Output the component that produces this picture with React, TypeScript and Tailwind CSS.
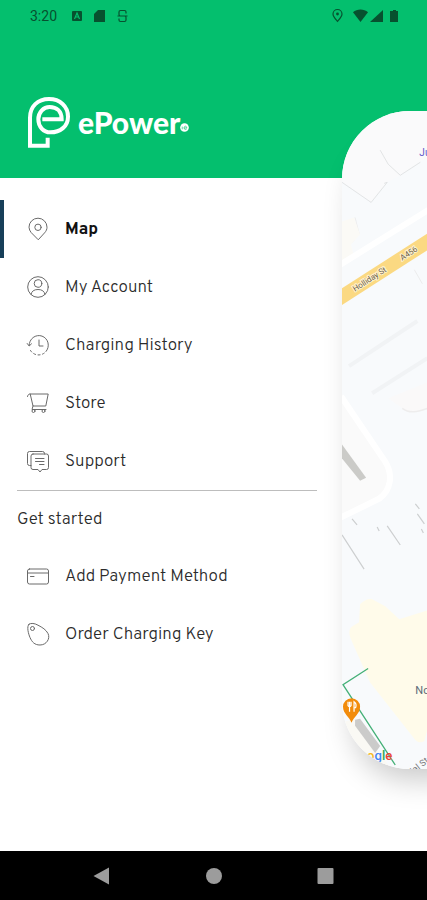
import type { ReactNode } from 'react'
import clsx from 'clsx'

function Icon({ children }: { children: ReactNode }) {
  return (
    <svg
      viewBox="0 0 24 24"
      className="size-6 shrink-0"
      fill="none"
      stroke="#6a6a6a"
      strokeWidth="1"
      strokeLinecap="round"
      strokeLinejoin="round"
      aria-hidden="true"
    >
      {children}
    </svg>
  )
}

const mainItems = [
  {
    label: 'Map',
    active: true,
    icon: (
      <Icon>
        <path d="M12 22.500 5.200 15.600A9.200 9.200 0 0 1 3 10.200a9 9 0 0 1 18 0c0 2-.8 3.900-2.200 5.400Z" />
        <circle cx="12" cy="10.300" r="3.200" />
      </Icon>
    ),
  },
  {
    label: 'My Account',
    icon: (
      <Icon>
        <circle cx="12" cy="12" r="10.300" />
        <circle cx="12" cy="8.500" r="3.800" />
        <path d="M5 19.500c.5-3.300 3-5 7-5s6.500 1.700 7 5" />
      </Icon>
    ),
  },
  {
    label: 'Charging History',
    icon: (
      <Icon>
        <path d="M3.200 12.500A9.600 9.600 0 1 1 20 18.500" />
        <path d="M4.500 17.500a9.600 9.600 0 0 0 14.500 2" strokeDasharray="2 2.500" />
        <path d="m1.200 10.500 2 2.500 2.300-2.200M13 7v6h4" />
      </Icon>
    ),
  },
  {
    label: 'Store',
    icon: (
      <Icon>
        <path d="M1.500 5.500C1.800 4 2.600 3 4.200 3h18l-2.400 12H7L4.200 3M7 15l-1 3.500h14" />
        <circle cx="7.500" cy="20" r="1.500" />
        <circle cx="17.500" cy="20" r="1.500" />
      </Icon>
    ),
  },
  {
    label: 'Support',
    icon: (
      <Icon>
        <path d="M7 5h13.500a2 2 0 0 1 2 2v11.500a2 2 0 0 1-2 2H16L14 23l-2-2.500H7a2 2 0 0 1-2-2V7a2 2 0 0 1 2-2Z" />
        <path d="M5 16.500H3.500a2 2 0 0 1-2-2V4.500a2 2 0 0 1 2-2h13a2 2 0 0 1 2 2V5" />
        <path d="M9.500 9.500h8.500M9.500 12.500h8.500M13.500 15.500h4.500" />
      </Icon>
    ),
  },
]

const startItems = [
  {
    label: 'Add Payment Method',
    icon: (
      <Icon>
        <rect x="1.500" y="5" width="21" height="15" rx="2" />
        <path d="M1.500 9h21M4.500 12.500h3.500" />
      </Icon>
    ),
  },
  {
    label: 'Order Charging Key',
    icon: (
      <Icon>
        <path d="M3 2.200C5 .8 8.500 1.200 12 3.200c4.500 2.300 8 4.500 10 8.300 2.500 5-1.500 11.500-8 11.500-5.500 0-8-3-10-7.500C2.500 12 .3 4.500 3 2.200Z" />
        <circle cx="6.500" cy="6.500" r="2" />
      </Icon>
    ),
  },
]

type Item = { label: string; icon: ReactNode; active?: boolean }

function MenuItem({ label, icon, active }: Item) {
  return (
    <li>
      <a
        href="#"
        aria-current={active ? 'page' : undefined}
        className={clsx(
          'flex h-[58px] items-center gap-[15px] border-l-4 pl-[22px] text-[17px]',
          active
            ? 'border-[#173f59] font-bold text-[#111111]'
            : 'border-transparent font-light text-[#2b2b2b]'
        )}
      >
        {icon}
        <span className="pt-1">{label}</span>
      </a>
    </li>
  )
}

function StatusBar() {
  return (
    <div className="flex h-8 items-center justify-between pr-7 pl-[30px] text-[#07512f]">
      <div className="flex items-center gap-3">
        <span className="text-sm">3:20</span>
        <svg viewBox="0 0 60 16" className="h-4 w-[60px]" aria-hidden="true">
          <rect x="3" y="3" width="10" height="10" rx="1" fill="currentColor" />
          <path d="m5.500 11 2.500-6 2.500 6M6.500 9h3" fill="none" stroke="#04bf6e" strokeWidth="1.200" />
          <path d="M29 2h7v12H25V6Z" fill="currentColor" />
          <path
            d="M57 5.500V4a1.500 1.500 0 0 0-1.500-1.500h-4A1.500 1.500 0 0 0 50 4v2.500A1.500 1.500 0 0 0 51.500 8h4A1.500 1.500 0 0 1 57 9.500V12a1.500 1.500 0 0 1-1.500 1.500h-4A1.500 1.500 0 0 1 50 12v-1.500M48.500 8h10"
            fill="none"
            stroke="currentColor"
            strokeWidth="1.200"
          />
        </svg>
      </div>
      <svg viewBox="0 0 68 16" className="h-4 w-[68px]" aria-hidden="true">
        <path
          d="M6.500 13.300C4 10.500 2 8.500 2 6a4.500 4.500 0 0 1 9 0c0 2.500-2 4.500-4.500 7.300Z"
          fill="none"
          stroke="currentColor"
          strokeWidth="1.200"
        />
        <circle cx="6.500" cy="6" r="1.400" fill="currentColor" />
        <path d="M22 4.200c4-3.500 11-3.500 15 0L29.500 14Z" fill="currentColor" />
        <path d="M52 2v12H39Z" fill="currentColor" />
        <path d="M60 3h2V2h3v1h2v11h-8V3Z" fill="currentColor" />
      </svg>
    </div>
  )
}

function Logo() {
  return (
    <div className="flex items-center gap-2 text-white">
      <svg viewBox="0 0 129 156" className="h-[52px] w-[43px]" aria-hidden="true">
        <path
          d="M46 70h58c0-25-16-37-36-37-19 0-34 16-34 37 0 22 15 39 36 39 30 0 53-18 53-47C123 31 99 9 66 9 32 9 9 31 9 65v84h53v-24"
          fill="none"
          stroke="currentColor"
          strokeWidth="12"
        />
      </svg>
      <div className="flex items-end">
        <span className="font-['Lato'] text-3xl font-black">ePower</span>
        <svg viewBox="0 0 10 10" className="mb-2 size-[9px]" aria-hidden="true">
          <circle cx="5" cy="5" r="4.800" fill="currentColor" />
          <path d="M2.500 4v3M4.500 5.500h3C7.500 2.800 4.500 3 4.500 5.500c0 2 2 2 3 1" fill="none" stroke="#04bf6e" strokeWidth="0.700" />
        </svg>
      </div>
    </div>
  )
}

function MapPreview() {
  return (
    <svg
      viewBox="0 0 85 658"
      preserveAspectRatio="xMinYMin slice"
      className="h-full w-full"
      role="img"
      aria-label="Map"
    >
      <rect width="85" height="658" fill="#f8fafc" />
      <path d="M0 0h85v46L58 64 45 71 29 91 0 71Z" fill="#fafafb" />
      <g fill="none" stroke="#dcdee0" strokeWidth="0.800">
        <path d="m38 39 8 14 12 11 20-13M0 71l29 20 16-20-3 1" />
        <path d="m13 106 4 16-7 9M72 158l8 14" stroke="#e8e8e8" />
      </g>
      <path d="m0 110 12-4 6 17-9 10 3 12-12 6Z" fill="#fbfaf6" />

      {/* roads */}
      <path d="M-5 155 90 96" stroke="#ffffff" strokeWidth="6" />
      <path d="M-5 188 90 127" stroke="#fbd982" strokeWidth="14" />
      <path d="m7 254 68-45M30 281l55-35" stroke="#f1f3f5" strokeWidth="4" />
      <path d="m46 286 14 10c8 6 16 3 30-1V268Z" fill="#faf9f9" />
      <path d="M60 296c8 6 16 3 25 0" fill="none" stroke="#eeeded" strokeWidth="1.500" />
      <path d="m0 288 43 62c7 11 6 25-5 36L0 404Z" fill="#fafafa" />
      <path d="m-1 284 44 65c8 13 6 28-6 37L-2 405" fill="none" stroke="#ffffff" strokeWidth="6" />
      <path d="m0 332 24 33-6 3L0 346Z" fill="#cbcbc8" />
      <path
        d="m73 391 4 5M75 401l7 10M79 416l2 4M10 406l5 6M35 414l2 4M45 413l13 19M0 422l22 34"
        stroke="#cdcfd0"
        strokeWidth="1.200"
      />

      <path
        d="M18 491c4-4 8-6 12-5l13 7 14 13 28-9v119l-3 11c-3 2-6 2-9-1L28 569 9 526c-3-7-2-12 3-14l5-3Z"
        fill="#fffbea"
      />
      <path d="m0 609 12-4 40 54H20Z" fill="#faf9f4" />
      <path d="m13 606 5-1 20 27-5 7-20-27Z" fill="#cbcbca" />
      <path d="m26 555-25 16 52 80" fill="none" stroke="#45b077" strokeWidth="1.300" />
      <path d="M9.500 609c-2-6-8.500-9-8.500-16a8.500 8.500 0 0 1 17 0c0 7-6.500 10-8.500 16Z" fill="#f28c0c" />
      <path
        d="M6 588v4q1.500 2 3 0v-4M7.500 588v10M12 598v-10q3 2 1.500 6H12"
        fill="none"
        stroke="#ffffff"
        strokeWidth="1.200"
      />

      <text x="77" y="45" fontSize="10" fill="#6257c9">Ju</text>
      <g fontSize="8" fill="#6d604a" stroke="#fff3d0" strokeWidth="2" paintOrder="stroke">
        <text transform="translate(13 180) rotate(-33)">Holliday St</text>
        <text transform="translate(60 149) rotate(-33)">A456</text>
      </g>
      <text x="73" y="580" fontSize="11" fill="#5e6b78">No</text>
      <text transform="translate(71 660) rotate(-38)" fontSize="9" fill="#77777a">ial St</text>
      <text x="25" y="646" fontSize="13" fontWeight="500">
        <tspan fill="#f6b921">o</tspan><tspan fill="#4285f4">g</tspan><tspan fill="#34a853">l</tspan><tspan fill="#ea4335">e</tspan>
      </text>
    </svg>
  )
}

function App() {
  return (
    <div className="relative flex min-h-screen flex-col overflow-hidden bg-white font-['Overpass','Inter',sans-serif]">
      <header className="h-[178px] bg-[#04bf6e] font-['Roboto',sans-serif]">
        <StatusBar />
        <div className="pt-16 pl-[27px]">
          <Logo />
        </div>
      </header>

      <nav className="w-4/5 grow pt-[22px]" aria-label="Main menu">
        <ul>
          {mainItems.map((item) => (
            <MenuItem key={item.label} {...item} />
          ))}
        </ul>
        <hr className="mr-[25px] ml-[17px] border-[#bdbdbd]" />
        <h2 className="flex h-14 items-center pt-1 pl-[17px] text-[17px] font-light text-[#2b2b2b]">
          Get started
        </h2>
        <ul>
          {startItems.map((item) => (
            <MenuItem key={item.label} {...item} />
          ))}
        </ul>
      </nav>

      {/* current screen, pushed aside while the drawer is open */}
      <main className="absolute top-[111px] left-4/5 h-[658px] w-full overflow-hidden rounded-[68px] font-['Roboto',sans-serif] shadow-[0_22px_30px_-12px_rgba(0,0,0,0.22)]">
        <div className="h-full w-1/5">
          <MapPreview />
        </div>
      </main>

      <footer className="flex h-[49px] items-center justify-evenly bg-black text-[#9c9c9c]">
        <button type="button" aria-label="Back" className="size-6">
          <svg viewBox="0 0 24 24" fill="currentColor">
            <path d="M20 3.500v17L4.500 12Z" />
          </svg>
        </button>
        <button type="button" aria-label="Home" className="size-6">
          <svg viewBox="0 0 24 24" fill="currentColor">
            <circle cx="12" cy="12" r="8" />
          </svg>
        </button>
        <button type="button" aria-label="Recent apps" className="size-6">
          <svg viewBox="0 0 24 24" fill="currentColor">
            <rect x="3.500" y="4" width="16" height="16" rx="1" />
          </svg>
        </button>
      </footer>
    </div>
  )
}

export default App
